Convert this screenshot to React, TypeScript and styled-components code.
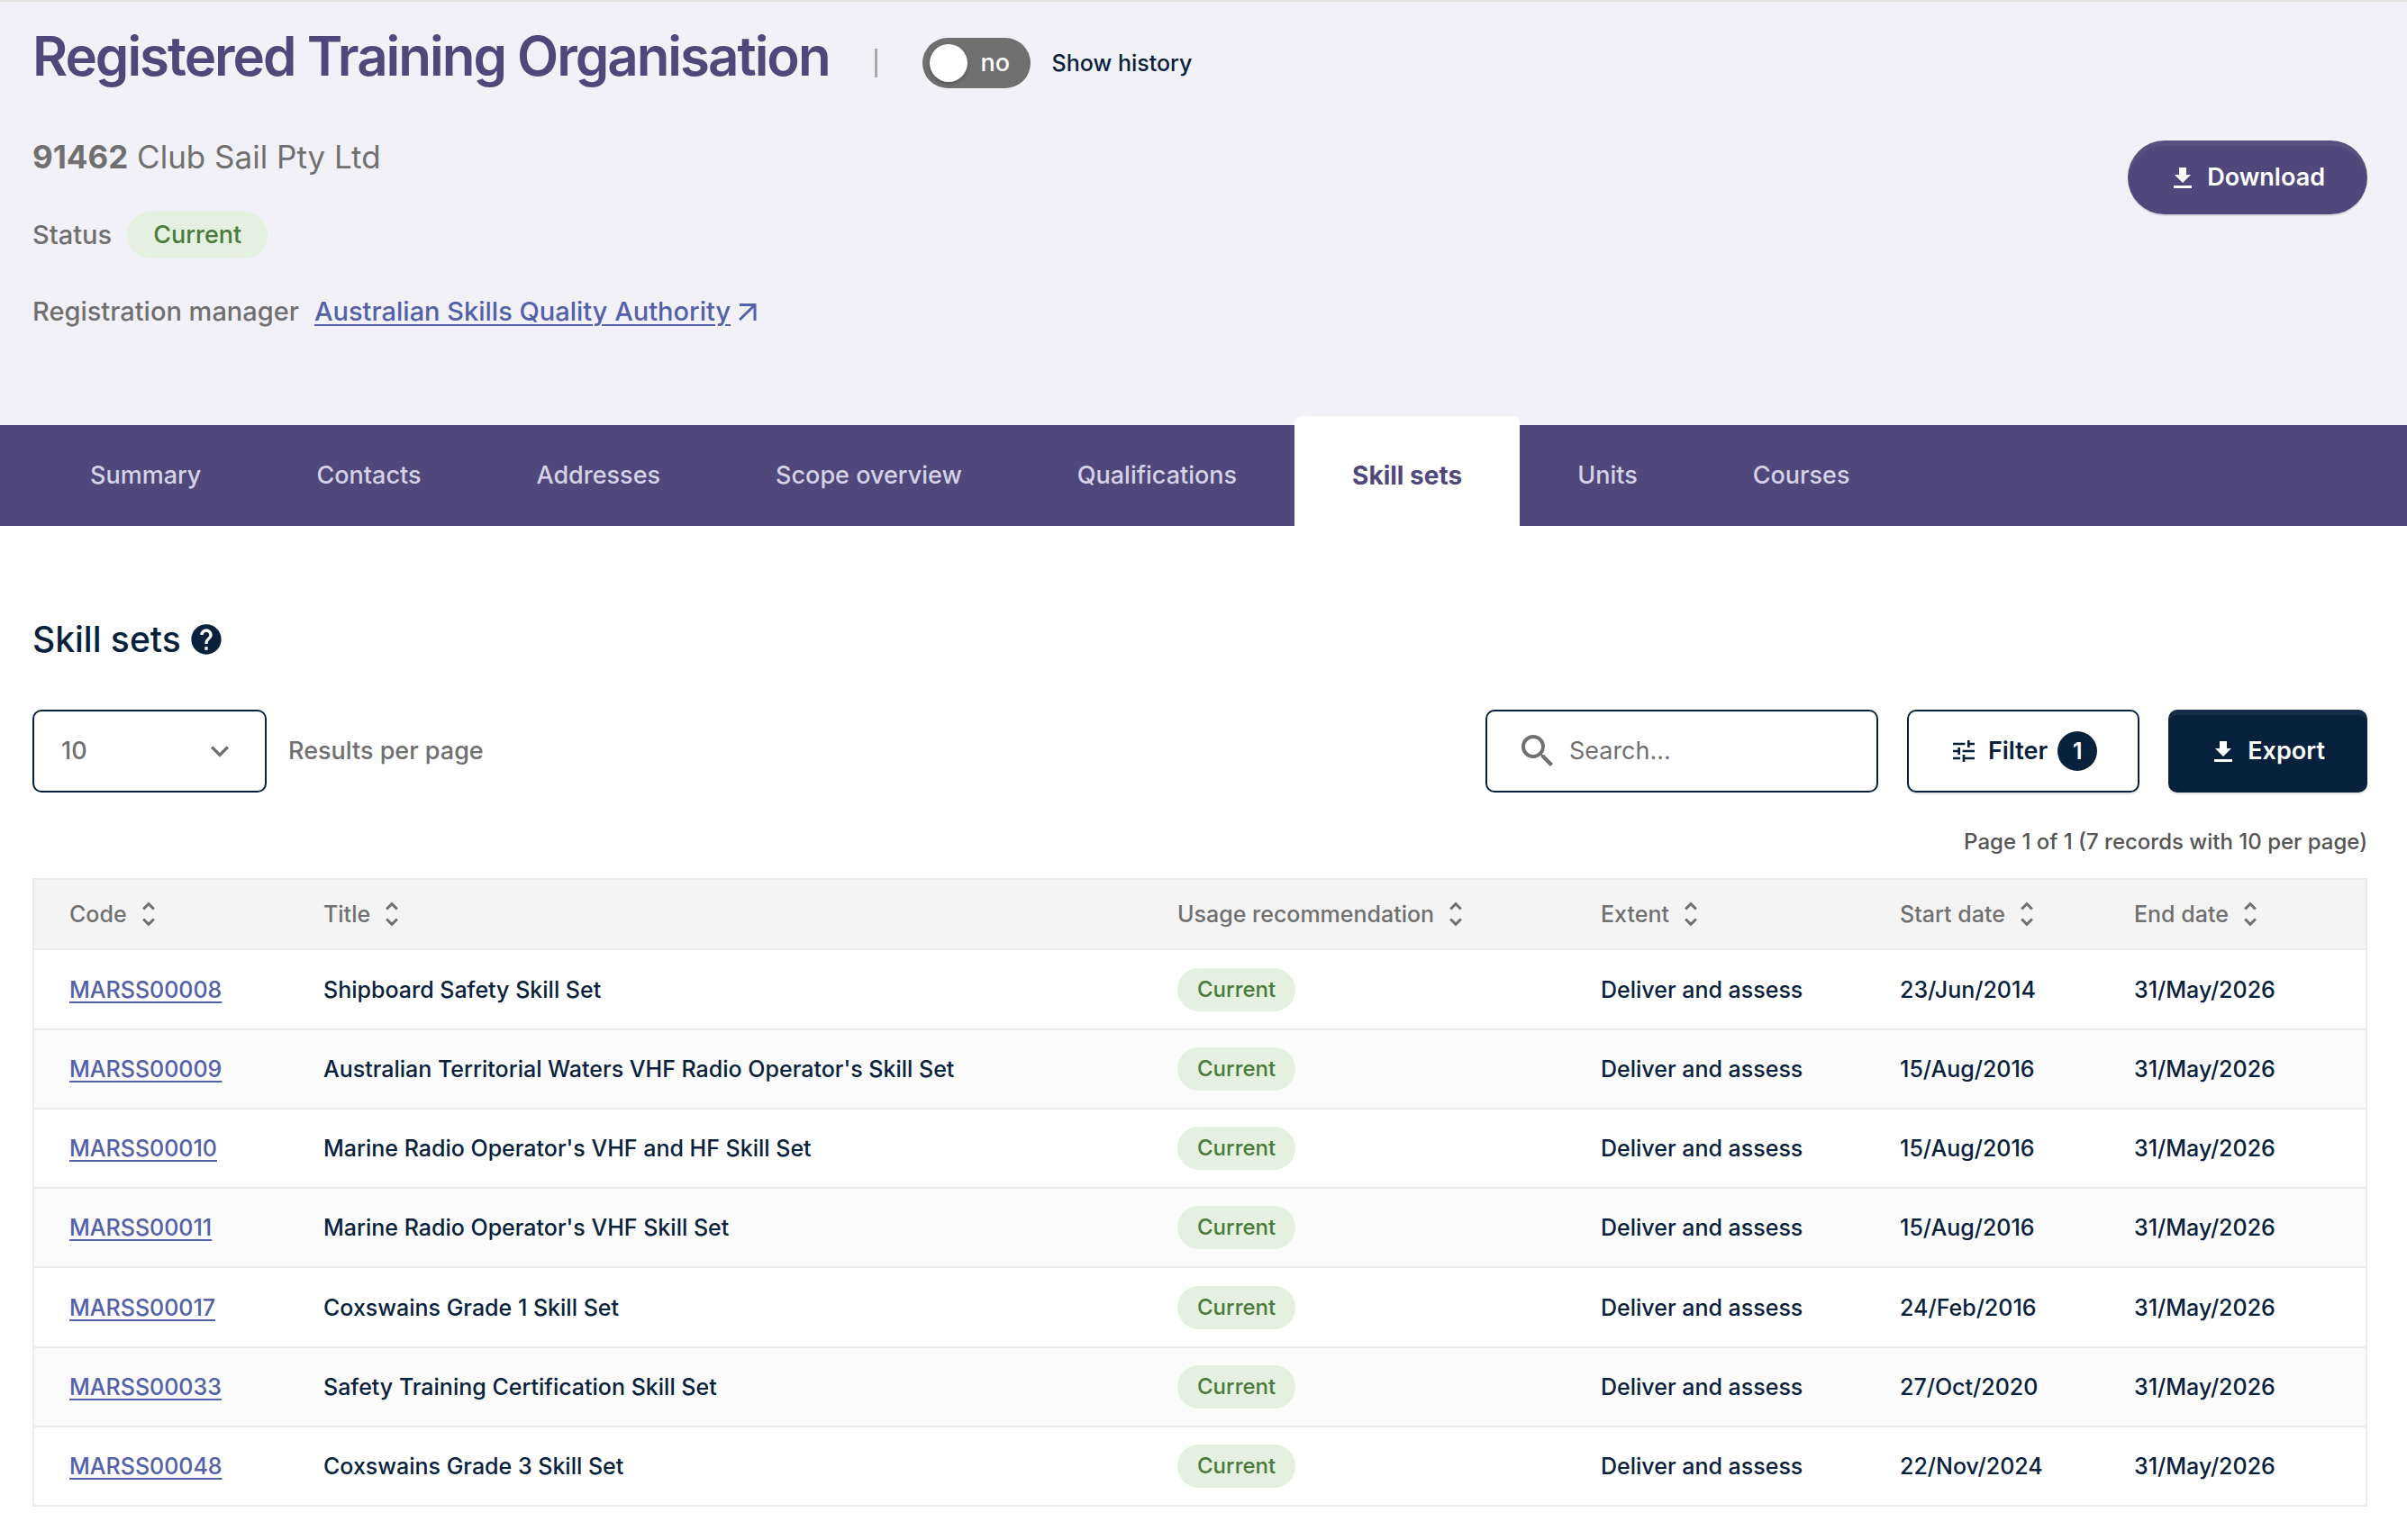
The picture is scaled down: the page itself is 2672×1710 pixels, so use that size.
import React, { useState } from 'react';
import styled, { createGlobalStyle, css } from 'styled-components';
import { MdTune, MdSearch, MdHelp, MdUnfoldMore, MdExpandMore } from 'react-icons/md';

const navy = '#08213c';
const purple = '#50487a';
const grey = '#707070';
const blue = '#5361a8';

const GlobalStyle = createGlobalStyle`
  *, *::before, *::after { box-sizing: border-box; }
  body {
    margin: 0;
    background: #fff;
    color: ${navy};
    font-family: Inter, "Liberation Sans", sans-serif;
    font-size: 27px;
    line-height: 36px;
    font-weight: 500;
  }
  button, input, select { font: inherit; color: inherit; }
`;

const Header = styled.header`
  display: flex;
  justify-content: space-between;
  align-items: flex-start;
  min-height: 472px;
  padding: 20px 44px 0 36px;
  border-top: 2px solid #e1e1e1;
  background: #f2f1f7;
  color: ${grey};
`;

const TitleRow = styled.div`
  display: flex;
  align-items: center;
  height: 80px;
`;

const Title = styled.h1`
  margin: 0 50px 0 0;
  color: ${purple};
  font-size: 60px;
  line-height: 80px;
  font-weight: 600;
  letter-spacing: -2px;
`;

const Divider = styled.span`
  width: 3px;
  height: 32px;
  margin: 16px 50px 0 0;
  background: #a9a9a9;
`;

const ToggleLabel = styled.label`
  display: flex;
  align-items: center;
  gap: 24px;
  margin-top: 16px;
  color: ${navy};
  font-size: 25px;
`;

const ToggleInput = styled.input`
  position: absolute;
  opacity: 0;
`;

const Track = styled.span`
  display: flex;
  align-items: center;
  gap: 15px;
  width: 120px;
  height: 56px;
  padding: 0 8px;
  border-radius: 28px;
  background: ${grey};
  color: #fff;
  font-size: 27px;
`;

const Knob = styled.span`
  width: 42px;
  height: 42px;
  border-radius: 50%;
  background: #fff;
  box-shadow: 0 2px 4px rgba(0, 0, 0, 0.25);
`;

const OrgName = styled.p`
  margin: 44px 0 0;
  font-size: 35px;
  line-height: 56px;
  font-weight: 400;
`;

const Detail = styled.div`
  display: flex;
  align-items: center;
  gap: 17px;
  margin-top: 33px;
  height: 52px;
  font-size: 29px;
`;

const Pill = styled.span<{ $small?: boolean }>`
  display: inline-flex;
  align-items: center;
  justify-content: center;
  height: ${p => (p.$small ? 48 : 52)}px;
  padding: 0 ${p => (p.$small ? 22 : 29)}px;
  border-radius: 26px;
  background: #e4f0e0;
  color: #4a7a3c;
  font-size: ${p => (p.$small ? 24 : 27)}px;
`;

const TextLink = styled.a`
  display: inline-flex;
  align-items: center;
  gap: 9px;
  color: ${blue};
  text-decoration: underline;
  text-decoration-thickness: 2px;
  text-underline-offset: 4px;
`;

const Button = styled.button<{ $kind: 'round' | 'solid' | 'outline' }>`
  display: inline-flex;
  align-items: center;
  gap: 17px;
  height: 92px;
  padding: 0 47px 0 51px;
  border: 0;
  border-radius: 10px;
  background: ${navy};
  color: #fff;
  font-weight: 600;
  box-shadow: 0 2px 0 rgba(0, 0, 0, 0.1), inset 0 6px 0 rgba(255, 255, 255, 0.05);
  ${p => p.$kind === 'outline' && css`
    gap: 11px;
    padding: 0 45px;
    border: 2px solid ${navy};
    background: #fff;
    color: ${navy};
  `}
  ${p => p.$kind === 'round' && css`
    height: 82px;
    margin-top: 134px;
    border-radius: 41px;
    background: ${purple};
  `}
`;

const Tabs = styled.nav`
  display: flex;
  height: 112px;
  padding-left: 36px;
  background: ${purple};
`;

const Tab = styled.a<{ $active?: boolean }>`
  display: flex;
  align-items: center;
  padding: 0 64px;
  color: #d5d2e8;
  text-decoration: none;
  ${p => p.$active && css`
    margin-top: -10px;
    padding-top: 10px;
    border-radius: 8px 8px 0 0;
    background: #fff;
    color: ${purple};
    font-size: 28px;
    font-weight: 700;
  `}
`;

const Main = styled.main`
  padding: 96px 44px 34px 36px;
`;

const Heading = styled.h2`
  display: flex;
  align-items: center;
  gap: 8px;
  margin: 0;
  font-size: 39px;
  line-height: 60px;
  font-weight: 500;
`;

const Toolbar = styled.div`
  display: flex;
  align-items: center;
  gap: 32px;
  margin-top: 48px;
`;

const PageSize = styled.div`
  display: flex;
  align-items: center;
  gap: 24px;
  margin-right: auto;
  color: ${grey};
`;

const SelectBox = styled.div`
  display: grid;
  align-items: center;
  width: 260px;
  height: 92px;
  > * { grid-area: 1 / 1; }
  svg {
    justify-self: end;
    margin-right: 32px;
    pointer-events: none;
  }
`;

const Select = styled.select`
  width: 100%;
  height: 100%;
  padding: 0 30px;
  border: 2px solid ${navy};
  border-radius: 10px;
  background: #fff;
  appearance: none;
`;

const SearchBox = styled.label`
  display: flex;
  align-items: center;
  gap: 11px;
  width: 436px;
  height: 92px;
  padding: 0 32px;
  border: 2px solid ${navy};
  border-radius: 10px;
  color: ${grey};
  svg { flex: none; }
`;

const SearchInput = styled.input`
  flex: 1;
  min-width: 0;
  padding: 0;
  border: 0;
  outline: 0;
  background: none;
  font-weight: 400;
  &::placeholder { color: ${grey}; opacity: 1; }
`;

const Count = styled.span`
  display: grid;
  place-items: center;
  width: 44px;
  height: 44px;
  border-radius: 50%;
  background: ${navy};
  color: #fff;
  font-size: 25px;
`;

const Summary = styled.p`
  margin: 37px 0 22px;
  color: #555;
  font-size: 24px;
  text-align: right;
`;

const Table = styled.table`
  width: 100%;
  table-layout: fixed;
  border-collapse: separate;
  border-spacing: 0;
  border: 2px solid #ebebeb;
  border-bottom: 0;
  font-size: 25px;
`;

const Col = styled.col<{ $width?: number }>`
  width: ${p => (p.$width ? `${p.$width}px` : 'auto')};
`;

const HeadCell = styled.th`
  height: 78px;
  padding: 0 0 0 39px;
  border-bottom: 2px solid #ebebeb;
  background: #f4f4f4;
  color: ${grey};
  font-weight: 500;
  text-align: left;
`;

const SortButton = styled.button`
  display: inline-flex;
  align-items: center;
  gap: 6px;
  padding: 0;
  border: 0;
  background: none;
  white-space: nowrap;
`;

const Row = styled.tr`
  height: 88px;
  &:nth-child(4n + 1) { height: 89px; }
  &:nth-child(even) { background: #fbfbfb; }
`;

const Cell = styled.td`
  padding: 0 0 0 39px;
  border-bottom: 2px solid #ebebeb;
  white-space: nowrap;
`;

const DownloadIcon = () => (
  <svg width="20" height="23" viewBox="0 0 20 23" fill="currentColor" aria-hidden="true">
    <path d="M6 0h8v8h5l-9 9-9-9h5zM0 20h20v3H0z" />
  </svg>
);

const ExternalIcon = () => (
  <svg width="20" height="20" viewBox="0 0 20 20" fill="none" stroke="currentColor" strokeWidth="3" aria-hidden="true">
    <path d="M1 2.500h17V20M18 2.500L1 19" />
  </svg>
);

const tabs = ['Summary', 'Contacts', 'Addresses', 'Scope overview', 'Qualifications', 'Skill sets', 'Units', 'Courses'];

const columns: { label: string; width?: number }[] = [
  { label: 'Code', width: 282 },
  { label: 'Title' },
  { label: 'Usage recommendation', width: 470 },
  { label: 'Extent', width: 332 },
  { label: 'Start date', width: 260 },
  { label: 'End date', width: 296 },
];

const rows = [
  ['MARSS00008', 'Shipboard Safety Skill Set', '23/Jun/2014'],
  ['MARSS00009', "Australian Territorial Waters VHF Radio Operator's Skill Set", '15/Aug/2016'],
  ['MARSS00010', "Marine Radio Operator's VHF and HF Skill Set", '15/Aug/2016'],
  ['MARSS00011', "Marine Radio Operator's VHF Skill Set", '15/Aug/2016'],
  ['MARSS00017', 'Coxswains Grade 1 Skill Set', '24/Feb/2016'],
  ['MARSS00033', 'Safety Training Certification Skill Set', '27/Oct/2020'],
  ['MARSS00048', 'Coxswains Grade 3 Skill Set', '22/Nov/2024'],
];

export default function App() {
  const [query, setQuery] = useState('');
  return (
    <>
      <GlobalStyle />
      <Header>
        <div>
          <TitleRow>
            <Title>Registered Training Organisation</Title>
            <Divider />
            <ToggleLabel>
              <ToggleInput type="checkbox" role="switch" />
              <Track><Knob />no</Track>
              Show history
            </ToggleLabel>
          </TitleRow>
          <OrgName><strong>91462</strong> Club Sail Pty Ltd</OrgName>
          <Detail>Status <Pill>Current</Pill></Detail>
          <Detail>
            Registration manager
            <TextLink href="#asqa">Australian Skills Quality Authority<ExternalIcon /></TextLink>
          </Detail>
        </div>
        <Button type="button" $kind="round"><DownloadIcon />Download</Button>
      </Header>
      <Tabs>
        {tabs.map(t => (
          <Tab key={t} href="#tab" $active={t === 'Skill sets'}>{t}</Tab>
        ))}
      </Tabs>
      <Main>
        <Heading>Skill sets <MdHelp size={40} /></Heading>
        <Toolbar>
          <PageSize>
            <SelectBox>
              <Select id="page-size" defaultValue="10">
                <option>10</option>
                <option>20</option>
                <option>50</option>
              </Select>
              <MdExpandMore size={40} />
            </SelectBox>
            <label htmlFor="page-size">Results per page</label>
          </PageSize>
          <SearchBox>
            <MdSearch size={48} />
            <SearchInput
              type="text"
              aria-label="Search"
              placeholder="Search..."
              value={query}
              onChange={e => setQuery(e.target.value)}
            />
          </SearchBox>
          <Button type="button" $kind="outline"><MdTune size={32} />Filter<Count>1</Count></Button>
          <Button type="button" $kind="solid"><DownloadIcon />Export</Button>
        </Toolbar>
        <Summary>Page 1 of 1 (7 records with 10 per page)</Summary>
        <Table>
          <colgroup>
            {columns.map(c => <Col key={c.label} $width={c.width} />)}
          </colgroup>
          <thead>
            <tr>
              {columns.map(c => (
                <HeadCell key={c.label} scope="col">
                  <SortButton type="button">{c.label}<MdUnfoldMore size={36} /></SortButton>
                </HeadCell>
              ))}
            </tr>
          </thead>
          <tbody>
            {rows.map(([code, title, start]) => (
              <Row key={code}>
                <Cell><TextLink href={`#${code}`}>{code}</TextLink></Cell>
                <Cell>{title}</Cell>
                <Cell><Pill $small>Current</Pill></Cell>
                <Cell>Deliver and assess</Cell>
                <Cell>{start}</Cell>
                <Cell>31/May/2026</Cell>
              </Row>
            ))}
          </tbody>
        </Table>
      </Main>
    </>
  );
}
